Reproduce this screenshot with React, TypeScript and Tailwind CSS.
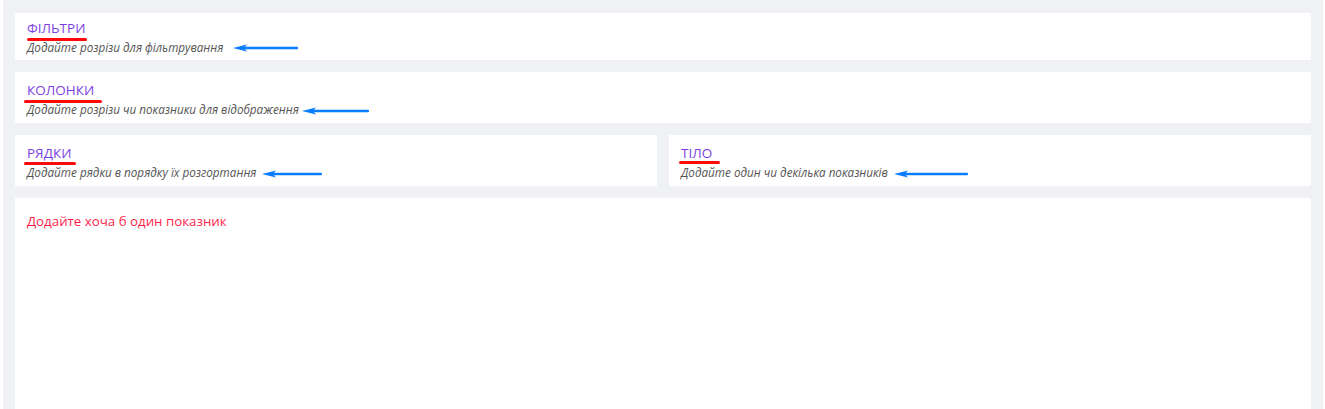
const Underline = ({ left, top, width }: { left: number; top: number; width: number }) => (
  <span
    className="absolute h-[3px] rounded-full bg-[#ff0a0a]"
    style={{ left, top, width }}
  />
);

const Arrow = ({ left, top, width }: { left: number; top: number; width: number }) => (
  <svg
    className="absolute"
    style={{ left, top: top - 5, width, height: 10 }}
    viewBox={`0 0 ${width} 10`}
  >
    <path d={`M0 5 L14 1.5 L11 5 L14 8.5 Z`} fill="#0a7cff" />
    <path d={`M10 5 L${width - 1} 5`} stroke="#0a7cff" strokeWidth="2.5" strokeLinecap="round" />
  </svg>
);

type Ann = { line: [number, number, number]; arrow: [number, number, number] };

const Section = ({
  title,
  hint,
  ann,
  className,
}: {
  title: string;
  hint: string;
  ann: Ann;
  className: string;
}) => (
  <div className={`relative shrink-0 bg-white px-3 ${className}`}>
    <div className="text-[13.5px] leading-[18px] text-[#7d3fe3]">{title}</div>
    <div className="mt-[3px] text-[11.7px] italic leading-[15px] text-[#555]">{hint}</div>
    <Underline left={ann.line[0]} top={ann.line[1]} width={ann.line[2]} />
    <Arrow left={ann.arrow[0]} top={ann.arrow[1]} width={ann.arrow[2]} />
  </div>
);

export default function App() {
  return (
    <div
      className="h-[409px] overflow-hidden bg-white pl-[3px] pr-[2px]"
      style={{ fontFamily: '"Open Sans", "Noto Sans", sans-serif' }}
    >
      <div className="flex h-full flex-col gap-3 bg-[#f0f1f5] px-3 pt-[13px]">
        <Section
          className="h-[47px] pt-[6px]"
          title="ФІЛЬТРИ"
          hint="Додайте розрізи для фільтрування"
          ann={{ line: [12, 25, 60], arrow: [218, 35, 65] }}
        />
        <Section
          className="h-[51px] pt-[9px]"
          title="КОЛОНКИ"
          hint="Додайте розрізи чи показники для відображення"
          ann={{ line: [9, 28, 78], arrow: [287, 39, 67] }}
        />
        <div className="flex shrink-0 gap-3">
          <Section
            className="h-[51px] flex-1 pt-[9px]"
            title="РЯДКИ"
            hint="Додайте рядки в порядку їх розгортання"
            ann={{ line: [9, 27, 52], arrow: [247, 39, 60] }}
          />
          <Section
            className="h-[51px] flex-1 pt-[9px]"
            title="ТІЛО"
            hint="Додайте один чи декілька показників"
            ann={{ line: [10, 26, 41], arrow: [225, 39, 74] }}
          />
        </div>
        <div className="h-[260px] shrink-0 bg-white px-3 pt-[14px]">
          <div className="text-[13.3px] leading-[18px] text-[#ff1f4b]">Додайте хоча б один показник</div>
        </div>
      </div>
    </div>
  );
}
